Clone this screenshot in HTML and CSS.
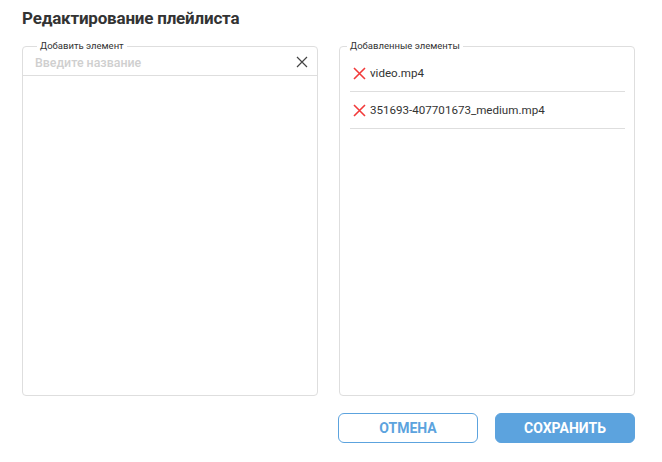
FILE: index.html
```html
<!DOCTYPE html>
<html lang="ru">
<head>
<meta charset="utf-8">
<link rel="stylesheet" href="styles.css">
</head>
<body>
<div class="dialog">
  <h1 class="title">Редактирование плейлиста</h1>
  <div class="panels">
    <fieldset class="panel panel-left">
      <legend class="legend legend-left">Добавить элемент</legend>
      <div class="search">
        <span class="placeholder">Введите название</span>
        <svg class="clear" width="12" height="12" viewBox="0 0 12 12"><path d="M1 1L11 11M11 1L1 11" stroke="#444" stroke-width="1.2" fill="none"/></svg>
      </div>
    </fieldset>
    <fieldset class="panel panel-right">
      <legend class="legend legend-right">Добавленные элементы</legend>
      <ul class="list">
        <li class="item">
          <svg class="remove" width="13" height="13" viewBox="0 0 13 13"><path d="M1 1L12 12M12 1L1 12" stroke="#f23a3a" stroke-width="1.6" fill="none"/></svg>
          <span>video.mp4</span>
        </li>
        <li class="item">
          <svg class="remove" width="13" height="13" viewBox="0 0 13 13"><path d="M1 1L12 12M12 1L1 12" stroke="#f23a3a" stroke-width="1.6" fill="none"/></svg>
          <span>351693-407701673_medium.mp4</span>
        </li>
      </ul>
    </fieldset>
  </div>
  <div class="actions">
    <button class="btn btn-outline">Отмена</button>
    <button class="btn btn-primary">Сохранить</button>
  </div>
</div>
</body>
</html>
```
FILE: styles.css
```css
* { box-sizing: border-box; }
html, body { margin: 0; padding: 0; background: #fff; }
body { font-family: Roboto, "Noto Sans", sans-serif; color: #333; }
.dialog { padding: 6px 27px 0 22px; width: 662px; }
.title { margin: 0; font-size: 17px; font-weight: 700; color: #333; line-height: 24px; letter-spacing: -0.2px; }
.panels { display: grid; grid-template-columns: 296px 296px; column-gap: 21px; margin-top: 10px; }
.panel { margin: 0; padding: 0; border: 1px solid #dedede; border-radius: 4px; height: 356px; min-width: 0; }
.legend { font-size: 9.5px; line-height: 12px; color: #333; }
.legend-left { margin-left: 14px; padding: 0 3px; }
.legend-right { margin-left: 7px; padding: 0 3px; }
.search { display: flex; align-items: center; justify-content: space-between; height: 24px; padding: 0 9px 3px 12px; border-bottom: 1px solid #dedede; }
.placeholder { font-size: 12.4px; font-weight: 500; color: #cfcfcf; }
.clear { display: block; }
.list { list-style: none; margin: 0; padding: 3px 9px 0 10px; }
.item { display: flex; align-items: center; gap: 4px; height: 37px; padding-left: 3px; border-bottom: 1px solid #dedede; font-size: 11.6px; color: #333; }
.remove { display: block; flex: none; }
.actions { display: flex; justify-content: flex-end; gap: 17px; margin-top: 17px; }
.btn { width: 140px; height: 30px; border-radius: 6px; font-family: Roboto, sans-serif; font-size: 14px; font-weight: 700; text-transform: uppercase; cursor: pointer; }
.btn-outline { background: #fff; border: 1px solid #5ca3de; color: #5ca3de; }
.btn-primary { background: #5ca3de; border: 1px solid #5ca3de; color: #fff; }
```
